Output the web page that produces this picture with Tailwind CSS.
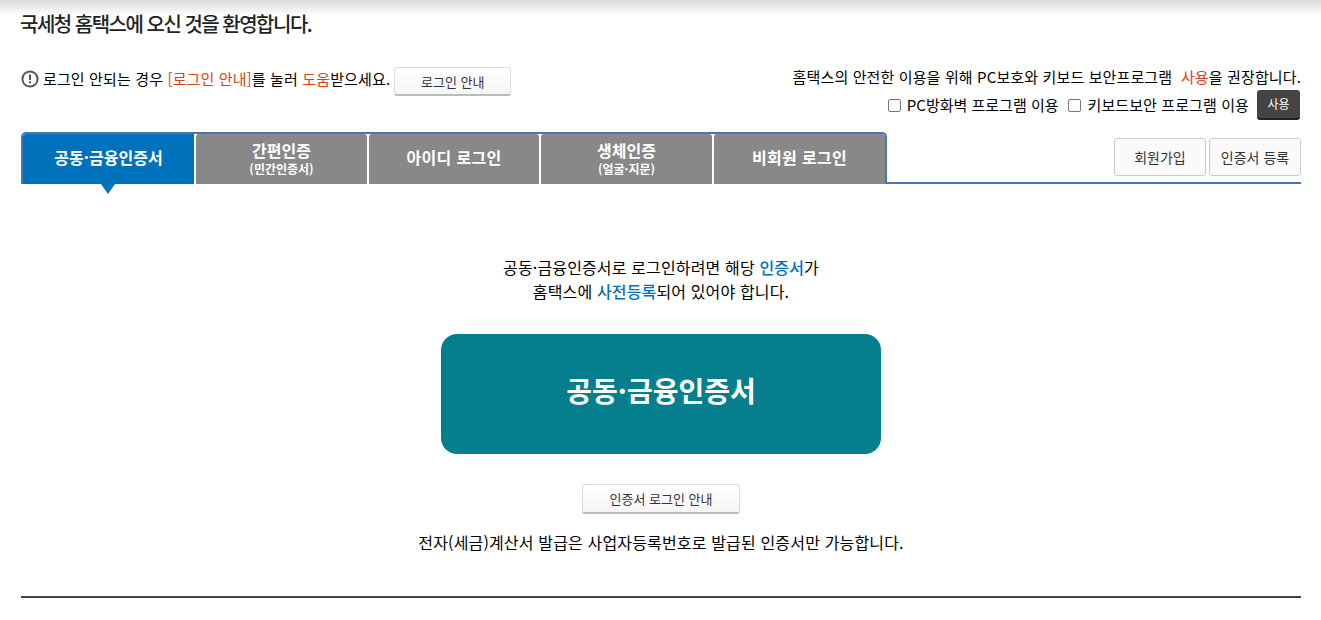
<!DOCTYPE html>
<html lang="ko">
<head>
<meta charset="utf-8">
<script src="https://cdn.jsdelivr.net/npm/@tailwindcss/browser@4"></script>
</head>
<body class="bg-white overflow-hidden font-['Noto_Sans_CJK_KR','Noto_Sans',sans-serif] text-[15px] text-black">
<div class="relative h-[620px] w-[1321px]">
  <div class="absolute left-0 right-0 top-0 h-[16px] bg-gradient-to-b from-[#dcdcdc] to-white"></div>
  <div class="relative pl-[21px] pr-[20px]">
    <h1 class="-ml-[1px] h-[67px] pt-[11px] text-[20px] leading-[26px] font-medium tracking-[-1.5px] text-[#222]">국세청 홈택스에 오신 것을 환영합니다.</h1>

    <div class="flex justify-between h-[65px]">
      <div class="flex items-start">
        <svg class="mt-[3px] mr-[4px]" width="18" height="18" viewBox="0 0 18 18"><circle cx="9" cy="9" r="7.6" fill="none" stroke="#555" stroke-width="2"/><rect x="8" y="4.5" width="2" height="5.5" fill="#555"/><rect x="8" y="11.3" width="2" height="2" fill="#555"/></svg>
        <p class="leading-[24px] tracking-[0.13px]">로그인 안되는 경우 <span class="text-[#d8421a]">[로그인 안내]</span>를 눌러 <span class="text-[#d8421a]">도움</span>받으세요.</p>
        <button class="ml-[4px] h-[29px] w-[117px] rounded-[3px] border border-[#ddd] border-b-[#bbb] border-b-2 bg-gradient-to-b from-white to-[#f5f5f5] text-[13px] leading-none text-[#333]">로그인 안내</button>
      </div>
      <div class="flex flex-col items-end">
        <p class="h-[22px] leading-[20px] tracking-[0.13px]">홈택스의 안전한 이용을 위해 PC보호와 키보드 보안프로그램 &nbsp;<span class="text-[#d8421a]">사용</span>을 권장합니다.</p>
        <div class="flex items-center h-[31px] pt-[1px]">
          <span class="mr-[6px] h-[13px] w-[13px] rounded-[2px] border border-[#767676]"></span>
          <span class="mr-[10px]">PC방화벽 프로그램 이용</span>
          <span class="mr-[6px] h-[13px] w-[13px] rounded-[2px] border border-[#767676]"></span>
          <span class="mr-[8px] tracking-[0.1px]">키보드보안 프로그램 이용</span>
          <button class="mr-[1px] h-[30px] w-[43px] rounded-[3px] border-b-2 border-[#222] bg-[#444] text-[12px] leading-none text-white">사용</button>
        </div>
      </div>
    </div>

    <div class="flex justify-between h-[52px] border-b-2 border-[#4577b0]">
      <div class="flex h-[52px] w-[866px] gap-[2px] rounded-t-[5px] border-x-2 border-t-2 border-[#4577b0] bg-white">
        <a class="relative flex h-[50px] w-[171px] items-center justify-center rounded-tl-[3px] bg-[#0072bc] pb-[4px] text-[16px] font-bold text-white">공동·금융인증서
          <span class="absolute left-[78px] top-[50px] h-0 w-0 border-x-[7px] border-t-[10px] border-x-transparent border-t-[#0072bc]"></span>
        </a>
        <a class="flex h-[50px] w-[171px] flex-col items-center justify-center rounded-t-[3px] bg-[#888] pb-[1px] font-bold text-white"><span class="text-[16px] leading-[19px]">간편인증</span><span class="mt-[1px] text-[12px] leading-[15px]">(민간인증서)</span></a>
        <a class="flex h-[50px] w-[170px] items-center justify-center rounded-t-[3px] bg-[#888] pb-[4px] text-[16px] font-bold tracking-[0.3px] text-white">아이디 로그인</a>
        <a class="flex h-[50px] w-[171px] flex-col items-center justify-center rounded-t-[3px] bg-[#888] pb-[1px] font-bold text-white"><span class="text-[16px] leading-[19px]">생체인증</span><span class="mt-[1px] text-[12px] leading-[15px]">(얼굴·지문)</span></a>
        <a class="flex h-[50px] w-[171px] items-center justify-center rounded-t-[3px] bg-[#888] pb-[4px] text-[16px] font-bold tracking-[0.3px] text-white">비회원 로그인</a>
      </div>
      <div class="flex gap-[3px] pt-[6px]">
        <button class="h-[38px] w-[92px] rounded-[3px] border border-[#ccc] bg-[#fafafa] text-[14px] leading-none text-[#333]">회원가입</button>
        <button class="h-[38px] w-[92px] rounded-[3px] border border-[#ccc] bg-[#fafafa] text-[14px] leading-none text-[#333]">인증서 등록</button>
      </div>
    </div>

    <div class="flex flex-col items-center">
      <p class="mt-[71px] text-center text-[16px] leading-[24px] tracking-[0.15px]">공동·금융인증서로 로그인하려면 해당 <span class="font-medium text-[#0072bc]">인증서</span>가<br>홈택스에 <span class="font-medium text-[#0072bc]">사전등록</span>되어 있어야 합니다.</p>
      <button class="mt-[31px] h-[120px] w-[440px] rounded-[16px] bg-[#057f8e] pb-[8px] text-[28px] font-semibold leading-none text-white">공동·금융인증서</button>
      <button class="mt-[30px] h-[30px] w-[158px] rounded-[3px] border border-[#ddd] border-b-2 border-b-[#bbb] bg-gradient-to-b from-white to-[#f5f5f5] text-[13px] leading-none text-[#333]">인증서 로그인 안내</button>
      <p class="mt-[16px] text-[16px] leading-[24px] tracking-[0.16px]">전자(세금)계산서 발급은 사업자등록번호로 발급된 인증서만 가능합니다.</p>
    </div>
    <div class="mt-[42px] h-[2px] bg-[#444]"></div>
  </div>
</div>
</body>
</html>
